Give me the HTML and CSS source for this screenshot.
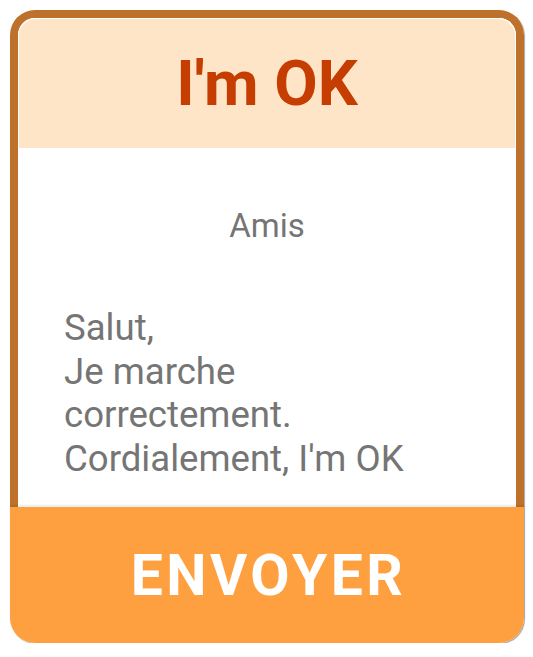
FILE: index.html
```html
<!DOCTYPE html>
<html lang="fr">
<head>
<meta charset="utf-8">
<title>I'm OK</title>
<link rel="stylesheet" href="styles.css">
</head>
<body>
<div class="card">
  <div class="frame">
    <div class="header"><h1 class="title">I'm OK</h1></div>
    <div class="content">
      <div class="recipient">Amis</div>
      <div class="message">Salut,<br>Je marche<br>correctement.<br>Cordialement, I'm OK</div>
    </div>
  </div>
  <button class="send">ENVOYER</button>
</div>
</body>
</html>
```
FILE: styles.css
```css
html, body {
  margin: 0;
  padding: 0;
  background: #ffffff;
}
body {
  font-family: Roboto, "Noto Sans", sans-serif;
  padding: 10px 0 0 10px;
}
.card {
  width: 514px;
  height: 633px;
  display: flex;
  flex-direction: column;
  border-radius: 25px;
  box-shadow: 1px 1px 1px rgba(0,0,0,0.35);
}
.frame {
  flex: 1;
  display: flex;
  flex-direction: column;
  border: 8px solid #be712a;
  border-bottom: none;
  border-radius: 25px 25px 0 0;
  background: #ffffff;
  overflow: hidden;
}
.header {
  height: 130px;
  background: #ffe5c7;
  border-radius: 17px 17px 0 0;
  box-shadow: inset 1px 1px 0 rgba(255,255,255,0.9), inset -1px 1px 0 rgba(255,255,255,0.9);
  display: flex;
  align-items: center;
  justify-content: center;
}
.title {
  margin: 0;
  font-size: 63px;
  font-weight: 700;
  color: #c53d00;
  line-height: 1;
}
.content {
  flex: 1;
  display: flex;
  flex-direction: column;
  padding: 0 0 0 46px;
}
.recipient {
  margin-top: 59px;
  margin-left: -46px;
  text-align: center;
  font-size: 33px;
  color: #757575;
  line-height: 38px;
}
.message {
  margin-top: 61px;
  font-size: 36.6px;
  line-height: 43.5px;
  color: #757575;
}
.send {
  height: 136px;
  border: none;
  margin: 0;
  padding: 0 0 0 3px;
  background: #ffa040;
  color: #ffffff;
  font-family: Roboto, "Noto Sans", sans-serif;
  font-weight: 700;
  font-size: 57px;
  letter-spacing: 3.5px;
  border-radius: 0 0 25px 25px;
  box-shadow: 0 -2px 2px rgba(0,0,0,0.08);
}
```
